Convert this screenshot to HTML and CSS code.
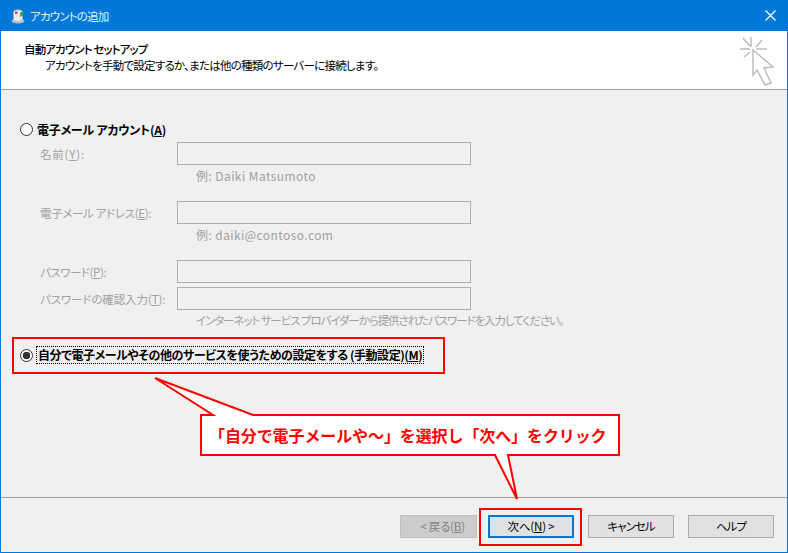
FILE: index.html
```html
<!DOCTYPE html>
<html lang="ja">

<head>
    <meta charset="UTF-8">
    <meta name="viewport" content="width=device-width, initial-scale=1.0">
    <title>アカウントの追加</title>
    <link rel="stylesheet" href="styles.css">
</head>

<body>
    <div class="window">
        <div class="title-bar">
            <svg class="app-icon" width="16" height="16" viewBox="0 0 16 16">
                <ellipse cx="8" cy="13" rx="6.5" ry="2.5" fill="#b9c2cc"/>
                <path d="M3.500 4C4 1 12 1 12.500 4v7.500C12 14 4 14 3.500 11.500z" fill="#e9ecef" stroke="#aab3bc" stroke-width="0.6"/>
                <rect x="5" y="3.500" width="2.500" height="2.500" fill="#d8404a"/>
                <path d="M10 9V4.500l3-1v4z" fill="#3fa34d"/>
            </svg>
            <span class="title-text">アカウントの追加</span>
            <svg class="close-icon" width="11" height="11" viewBox="0 0 11 11">
                <path d="M.5.5l10 10M10.500.5l-10 10" stroke="#fff" stroke-width="1.200" fill="none"/>
            </svg>
        </div>

        <div class="header">
            <div class="header-text">
                <div class="header-title">自動アカウント セットアップ</div>
                <div class="header-sub">アカウントを手動で設定するか、または他の種類のサーバーに接続します。</div>
            </div>
            <svg class="wizard-icon" width="36" height="52" viewBox="0 0 36 52" fill="none" stroke="#bdbdbd" stroke-width="1.500">
                <path d="M11 2v10M0 14h10M16 14h11M3 3l7 8M22 5l-6 7M4 22l6-5"/>
                <path d="M13 15l20 17-9 1 7 15-6 2-8-15-4 5z"/>
            </svg>
        </div>

        <div class="content">
            <label class="radio-row account-radio">
                <span class="radio"></span>
                <b>電子メール アカウント(<u>A</u>)</b>
            </label>

            <div class="form-row first">
                <span class="field-label label-name">名前(<u>Y</u>):</span>
                <span class="field"></span>
            </div>
            <div class="hint hint-latin">例: Daiki Matsumoto</div>

            <div class="form-row group">
                <span class="field-label label-mail">電子メール アドレス(<u>E</u>):</span>
                <span class="field"></span>
            </div>
            <div class="hint hint-latin">例: daiki@contoso.com</div>

            <div class="form-row group">
                <span class="field-label label-pass">パスワード(<u>P</u>):</span>
                <span class="field"></span>
            </div>
            <div class="form-row tight">
                <span class="field-label label-confirm">パスワードの確認入力(<u>T</u>):</span>
                <span class="field"></span>
            </div>
            <div class="hint hint-kana">インターネット サービス プロバイダーから提供されたパスワードを入力してください。</div>

            <label class="radio-row manual-radio">
                <span class="radio checked"></span>
                <b class="focus-text">自分で電子メールやその他のサービスを使うための設定をする (手動設定)(<u>M</u>)</b>
            </label>
        </div>

        <div class="footer">
            <button class="btn disabled">&lt; 戻る(<u>B</u>)</button>
            <button class="btn primary">次へ(<u>N</u>) &gt;</button>
            <button class="btn btn-kana">キャンセル</button>
            <button class="btn btn-kana">ヘルプ</button>
        </div>
    </div>

    <!-- annotations drawn over the dialog -->
    <div class="mark mark-manual"></div>
    <div class="mark mark-next"></div>
    <svg class="callout-shape" width="788" height="553" viewBox="0 0 788 553">
        <path d="M201 415H213L155 378l98 37H619V455H508L517 499 495 455H201z" fill="#fff" stroke="#f00" stroke-width="2"/>
    </svg>
    <div class="callout-text">「自分で電子メールや～」を選択し「次へ」をクリック</div>
</body>

</html>
```

FILE: styles.css
```css
* {
    box-sizing: border-box;
}
html, body {
    margin: 0;
    height: 100%;
}
body {
    position: relative;
    overflow: hidden;
    font-family: "Noto Sans CJK JP", "Noto Sans", sans-serif;
    font-size: 12px;
    font-feature-settings: "palt";
    color: #000;
    background-color: #f0f0f0;
}
.window {
    display: flex;
    flex-direction: column;
    height: 553px;
    border: 1px solid #0078d7;
    border-top: 0;
    background-color: #f0f0f0;
}
.title-bar {
    display: flex;
    align-items: center;
    height: 31px;
    flex: none;
    padding: 0 10px 0 9px;
    color: #fff;
    background-color: #0078d7;
}
.title-text {
    margin-left: 4px;
    font-size: 11.5px;
    letter-spacing: -0.8px;
    color: #e8f2fb;
}
.close-icon {
    margin-left: auto;
    margin-right: 1px;
}
.header {
    display: flex;
    justify-content: space-between;
    height: 59px;
    flex: none;
    padding: 10px 11px 0 23px;
    background-color: #fff;
    border-bottom: 1px solid #a0a0a0;
}
.header-title {
    font-size: 11.5px;
    font-weight: 500;
    letter-spacing: -0.87px;
    line-height: 17px;
}
.header-sub {
    padding-left: 21px;
    font-size: 11.5px;
    letter-spacing: -0.75px;
    line-height: 15px;
}
.wizard-icon {
    margin-top: -6px;
}
.content {
    flex: 1;
    padding: 30px 0 0 19px;
}
.radio-row {
    display: flex;
    align-items: center;
    height: 18px;
}
.radio {
    width: 13px;
    height: 13px;
    flex: none;
    margin-right: 4px;
    border: 1px solid #333;
    border-radius: 50%;
    background-color: #fff;
}
.radio.checked {
    border-color: #333;
    background: radial-gradient(circle, #333 0 3.500px, #fff 4px);
}
.radio-row b {
    font-weight: 700;
    letter-spacing: -0.22px;
}
.radio-row .focus-text {
    letter-spacing: -0.44px;
}
.form-row {
    display: flex;
    align-items: center;
    height: 23px;
    padding-left: 20px;
}
.form-row.first {
    margin-top: 4px;
}
.form-row.group {
    margin-top: 19px;
}
.form-row.tight {
    margin-top: 4px;
}
.field-label {
    width: 137px;
    flex: none;
    font-size: 11.5px;
    white-space: nowrap;
    color: #a0a0a0;
}
.label-name {
    letter-spacing: 0.8px;
}
.label-mail {
    letter-spacing: -0.33px;
}
.label-pass {
    letter-spacing: -0.45px;
}
.label-confirm {
    letter-spacing: -0.1px;
}
.field {
    width: 294px;
    height: 23px;
    border: 1px solid #adadad;
    background-color: #f0f0f0;
}
.hint {
    height: 13px;
    margin-top: 4px;
    padding-left: 176px;
    line-height: 13px;
    white-space: nowrap;
    color: #a0a0a0;
}
.hint-latin {
    letter-spacing: 0.42px;
}
.hint-kana {
    font-size: 11.5px;
    letter-spacing: -1.07px;
}
.manual-radio {
    margin-top: 19px;
}
.focus-text {
    padding: 0 1px;
    outline: 1px dotted #000;
    line-height: 16px;
    white-space: nowrap;
}
.footer {
    display: flex;
    justify-content: flex-end;
    height: 55px;
    flex: none;
    gap: 14px;
    padding: 17px 13px 0 0;
    border-top: 1px solid #a0a0a0;
}
.btn {
    width: 86px;
    height: 23px;
    padding: 0;
    border: 1px solid #adadad;
    background-color: #e1e1e1;
    font-family: inherit;
    font-size: 11.5px;
    font-feature-settings: inherit;
    letter-spacing: -0.2px;
    line-height: 1;
    color: #000;
}
.btn-kana {
    letter-spacing: -1px;
}
.btn.disabled {
    width: 77px;
    margin-right: -3px;
    padding-left: 8px;
    background-color: #cccccc;
    border-color: #bfbfbf;
    color: #838383;
}
.btn.primary {
    border: 2px solid #0078d7;
}
.mark {
    position: absolute;
    border: 2px solid #f00;
}
.mark-manual {
    left: 12px;
    top: 337px;
    width: 433px;
    height: 37px;
}
.mark-next {
    left: 479px;
    top: 508px;
    width: 103px;
    height: 38px;
}
.callout-shape {
    position: absolute;
    left: 0;
    top: 0;
}
.callout-text {
    position: absolute;
    left: 209px;
    top: 414px;
    height: 42px;
    line-height: 42px;
    font-size: 16px;
    font-weight: 700;
    font-feature-settings: normal;
    letter-spacing: -0.1px;
    white-space: nowrap;
    color: #f00;
}
```
